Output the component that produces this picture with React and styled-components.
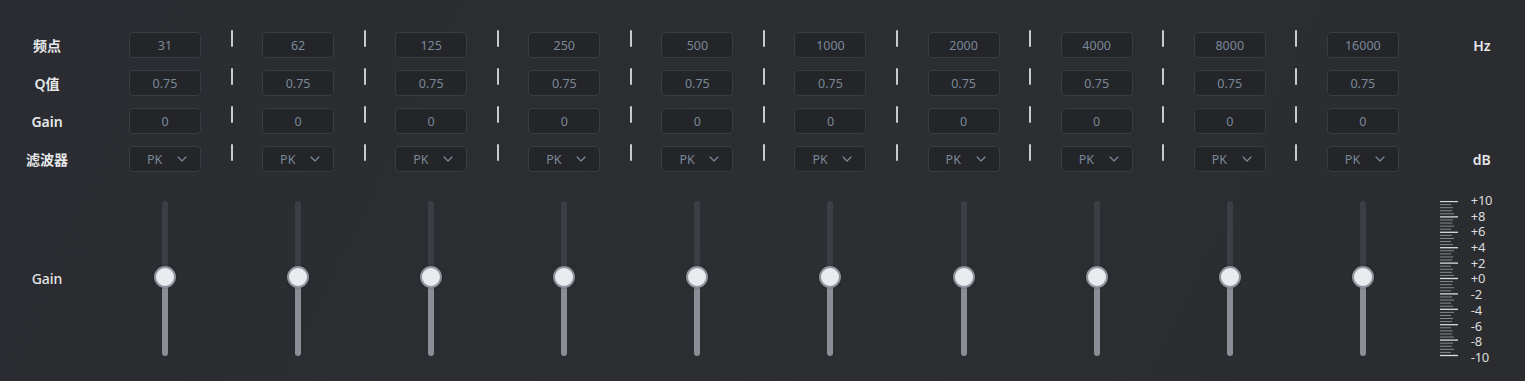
import React from 'react';
import styled, { createGlobalStyle } from 'styled-components';

const GlobalStyle = createGlobalStyle`
  html, body {
    margin: 0;
    padding: 0;
    background: #2a2c30;
  }
  body {
    font-family: "Noto Sans", "Noto Sans CJK SC", sans-serif;
  }
`;

const Panel = styled.div`
  width: 1525px;
  height: 381px;
  box-sizing: border-box;
  padding-top: 32px;
  background: linear-gradient(115deg, #2a2c31 0%, #2c2e32 55%, #2a2c30 100%);
  overflow: hidden;
`;

const Params = styled.div`
  display: flex;
  flex-direction: column;
  gap: 12px;
`;

const Row = styled.div`
  display: flex;
  align-items: center;
  height: 26px;
`;

const Label = styled.div`
  width: 94px;
  flex-shrink: 0;
  text-align: center;
  font-size: 14px;
  font-weight: 600;
  color: #e6e7e9;
  margin-right: 35px;
`;

const Cells = styled.div`
  display: flex;
  align-items: center;
`;

const Box = styled.div`
  width: 72px;
  height: 26px;
  box-sizing: border-box;
  border: 1px solid #393c42;
  border-radius: 4px;
  background: #232529;
  display: flex;
  align-items: center;
  justify-content: ${(p) => (p.$select ? 'space-between' : 'center')};
  padding: ${(p) => (p.$select ? '0 13px 0 17px' : '0')};
  font-size: 12.5px;
  color: #7b8898;
`;

const Sep = styled.div`
  width: 61.1px;
  height: 26px;
  display: flex;
  justify-content: center;
  align-items: flex-start;

  &::before {
    content: '';
    width: 2px;
    height: 17px;
    margin-top: -2px;
    background: #c9cacc;
    border-radius: 1px;
  }
`;

const Unit = styled.div`
  width: 40px;
  margin-left: 63px;
  text-align: center;
  font-size: 14px;
  font-weight: 600;
  color: #e6e7e9;
`;

const SliderRow = styled.div`
  display: flex;
  align-items: flex-start;
  margin-top: 29px;
`;

const SliderLabel = styled(Label)`
  height: 155px;
  display: flex;
  align-items: center;
  justify-content: center;
  font-weight: 500;
`;

const SliderCol = styled.div`
  width: 72px;
  height: 155px;
  display: flex;
  justify-content: center;
`;

const Gap = styled.div`
  width: 61.1px;
`;

const Track = styled.div`
  position: relative;
  width: 6px;
  height: 155px;
  border-radius: 3px;
  background: linear-gradient(
    to bottom,
    #3b3e44 0%,
    #3b3e44 ${(p) => p.$pos}%,
    #8a8e96 ${(p) => p.$pos}%,
    #8a8e96 100%
  );
`;

const Thumb = styled.div`
  position: absolute;
  left: 50%;
  width: 22px;
  height: 22px;
  box-sizing: border-box;
  border-radius: 50%;
  background: #e9ebef;
  border: 2px solid #8f939b;
  box-shadow: 0 0 2px rgba(0, 0, 0, 0.4);
  transform: translate(-50%, -50%);
`;

const Scale = styled.div`
  display: flex;
  margin-left: 41px;
  gap: 13px;
`;

const ScaleLabels = styled.div`
  display: flex;
  flex-direction: column;
  margin-top: -8px;
`;

const ScaleText = styled.span`
  height: 15.7px;
  line-height: 15.7px;
  font-size: 13px;
  color: #dcdddf;
  letter-spacing: -0.4px;
`;

const Chevron = () => (
  <svg width="10" height="6" viewBox="0 0 10 6" fill="none">
    <path d="M1 1l4 4 4-4" stroke="#7b8898" strokeWidth="1.2" strokeLinecap="round" strokeLinejoin="round" />
  </svg>
);

const Ticks = () => {
  const lines = [];
  const n = 50;
  const h = 154;
  const minorWidths = [14, 11, 13, 12];
  for (let i = 0; i <= n; i++) {
    const y = (i * h) / n + 0.5;
    const major = i % 5 === 0;
    const w = major ? 18 : minorWidths[i % 4];
    lines.push(
      <line
        key={i}
        x1="0"
        x2={w}
        y1={y}
        y2={y}
        stroke={major ? '#dadbdd' : '#85898f'}
        strokeWidth={major ? 1.3 : 1}
      />
    );
  }
  return (
    <svg width="18" height="156" viewBox="0 0 18 156">
      {lines}
    </svg>
  );
};

const freqs = ['31', '62', '125', '250', '500', '1000', '2000', '4000', '8000', '16000'];
const scale = ['+10', '+8', '+6', '+4', '+2', '+0', '-2', '-4', '-6', '-8', '-10'];

const ParamRow = ({ label, unit, render }) => (
  <Row>
    <Label>{label}</Label>
    <Cells>
      {freqs.map((f, i) => (
        <React.Fragment key={f}>
          {render(f)}
          {i < freqs.length - 1 && <Sep />}
        </React.Fragment>
      ))}
    </Cells>
    {unit && <Unit>{unit}</Unit>}
  </Row>
);

export default function App() {
  return (
    <>
      <GlobalStyle />
      <Panel>
        <Params>
          <ParamRow label="频点" unit="Hz" render={(f) => <Box>{f}</Box>} />
          <ParamRow label="Q值" render={() => <Box>0.75</Box>} />
          <ParamRow label="Gain" render={() => <Box>0</Box>} />
          <ParamRow
            label="滤波器"
            unit="dB"
            render={() => (
              <Box $select>
                <span>PK</span>
                <Chevron />
              </Box>
            )}
          />
        </Params>

        <SliderRow>
          <SliderLabel>Gain</SliderLabel>
          {freqs.map((f, i) => (
            <React.Fragment key={f}>
              <SliderCol>
                <Track $pos={49}>
                  <Thumb style={{ top: '49%' }} />
                </Track>
              </SliderCol>
              {i < freqs.length - 1 && <Gap />}
            </React.Fragment>
          ))}
          <Scale>
            <Ticks />
            <ScaleLabels>
              {scale.map((s) => (
                <ScaleText key={s}>{s}</ScaleText>
              ))}
            </ScaleLabels>
          </Scale>
        </SliderRow>
      </Panel>
    </>
  );
}
